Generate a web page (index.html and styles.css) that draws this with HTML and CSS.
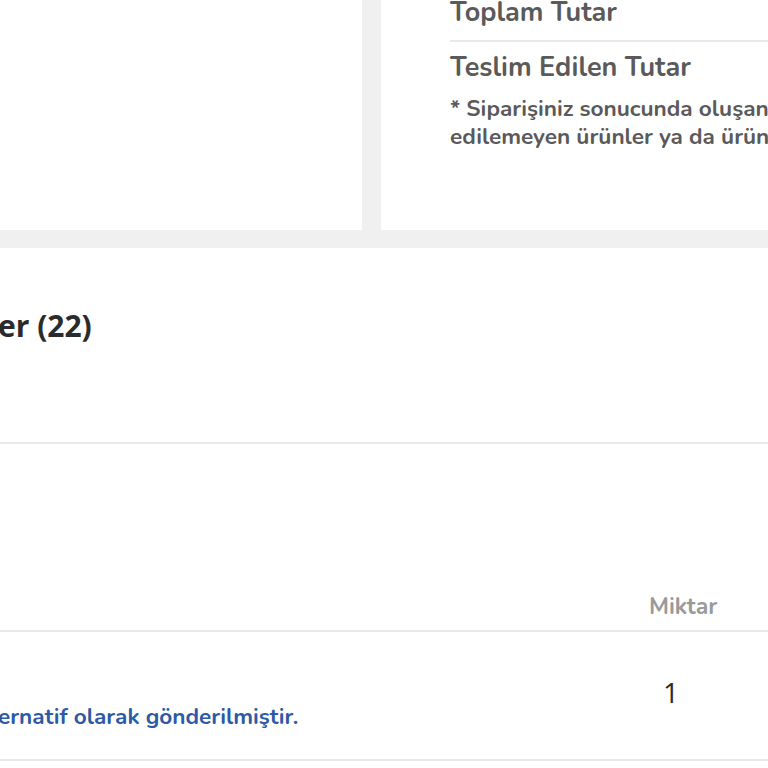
FILE: index.html
```html
<!DOCTYPE html>
<html lang="tr">
<head>
<meta charset="utf-8">
<title>Sipariş Detayı</title>
<link rel="stylesheet" href="styles.css">
</head>
<body>
<div class="top">
  <div class="card"></div>
  <div class="card summary">
    <div class="sum-row first">Toplam Tutar</div>
    <div class="sum-row second">Teslim Edilen Tutar</div>
    <p class="note"><span class="note-line">* Siparişiniz sonucunda oluşan</span><span class="note-line">edilemeyen ürünler ya da ürün</span></p>
  </div>
</div>
<section class="items">
  <div class="items-head"><h2 class="items-title">er (22)</h2></div>
  <div class="thead">
    <div class="th"></div>
    <div class="th qty-h">Miktar</div>
  </div>
  <div class="trow">
    <div class="td info"><span class="alt-note">ernatif olarak gönderilmiştir.</span></div>
    <div class="td qty">1</div>
  </div>
</section>
</body>
</html>
```
FILE: styles.css
```css
* { box-sizing: border-box; }
html, body { margin: 0; padding: 0; }
body {
  background: #f0f0f0;
  font-family: "Nunito", "Lato", "Open Sans", sans-serif;
  overflow: hidden;
  width: 768px;
  height: 768px;
}
.top {
  display: grid;
  grid-template-columns: 362px 1fr;
  column-gap: 19px;
  height: 230px;
}
.card { background: #fff; }
.summary {
  padding-left: 69px;
  overflow: hidden;
}
.sum-row {
  font-weight: 700;
  font-size: 27px;
  line-height: 26px;
  color: #5a5a5a;
  white-space: nowrap;
}
.sum-row.first {
  margin-top: 0;
  padding-bottom: 14px;
  border-bottom: 2px solid #e8e8e8;
}
.sum-row.second { padding-top: 13px; }
.note {
  display: flex;
  flex-direction: column;
  margin: 14px 0 0;
  font-size: 22.6px;
  line-height: 28px;
  font-weight: 700;
  color: #5a5a5a;
  white-space: nowrap;
}
.note-line { display: block; }
.items {
  margin-top: 18px;
  background: #fff;
  min-height: 520px;
}
.items-head {
  height: 196px;
  border-bottom: 2px solid #e8e8e8;
  padding-top: 58px;
}
.items-title {
  margin: 0 0 0 -2px;
  font-family: "Open Sans", sans-serif;
  font-weight: 700;
  font-size: 30px;
  line-height: 40px;
  color: #2b2b2b;
  white-space: nowrap;
}
.thead {
  display: grid;
  grid-template-columns: 649px 1fr;
  align-items: end;
  height: 188px;
  padding-bottom: 12px;
  border-bottom: 2px solid #e8e8e8;
}
.qty-h {
  font-weight: 700;
  font-size: 23px;
  line-height: 23px;
  color: #9a9a9a;
}
.trow {
  display: grid;
  grid-template-columns: 649px 1fr;
  height: 129px;
  border-bottom: 2px solid #e8e8e8;
}
.info { padding-top: 72px; }
.alt-note {
  display: block;
  margin-left: -2px;
  font-weight: 700;
  font-size: 22.6px;
  line-height: 26px;
  color: #2d5aa5;
  white-space: nowrap;
}
.qty {
  padding-top: 44px;
  padding-left: 14px;
  font-family: "Open Sans", sans-serif;
  font-size: 28px;
  line-height: 32px;
  color: #2b2b2b;
}
```
